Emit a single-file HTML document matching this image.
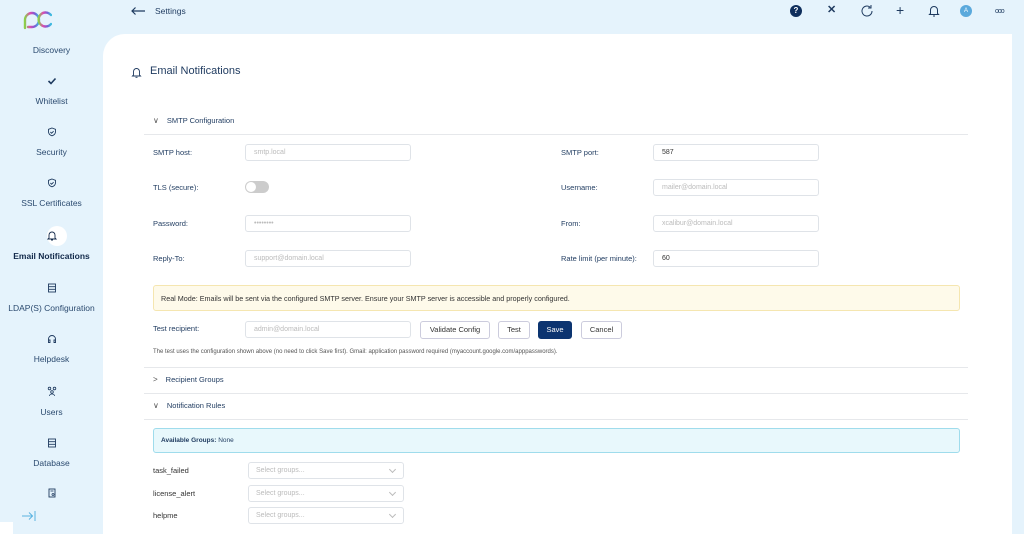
<!DOCTYPE html>
<html><head><meta charset="utf-8"><style>
*{box-sizing:border-box;margin:0;padding:0}
body{width:1024px;height:534px;overflow:hidden;background:#e5f3fc;font-family:"Liberation Sans",sans-serif;position:relative;color:#1e3a5f}
.a{position:absolute}
.nav{position:absolute;left:0;width:103px;text-align:center;font-size:8.5px;color:#2b4a6f}
.nav svg{display:block;margin:0 auto 10px}
.card{left:103px;top:34px;width:909px;height:500px;background:#fff;border-top-left-radius:22px}
.lbl{font-size:7.5px;color:#1e3a5f}
.in{height:17px;border:1px solid #dfe3e8;border-radius:3px;font-size:7px;color:#bbb;padding:4px 8px;background:#fff}
.in.v{color:#333}
.hr{height:1px;background:#e6e8eb}
.btn{height:18px;border:1px solid #ccd;border-radius:3px;font-size:7.5px;color:#333;text-align:center;line-height:16px;background:#fff}
.sec{font-size:7.5px;color:#1e3a5f}
.chev{font-size:8px;color:#555;margin-right:8px}
.sel{width:156px;height:17px;border:1px solid #dfe3e8;border-radius:3px;font-size:7px;color:#bbb;padding:4px 7px}
.sel:after{content:"";position:absolute;right:8px;top:4px;width:4px;height:4px;border-right:1px solid #bbb;border-bottom:1px solid #bbb;transform:rotate(45deg)}
</style></head><body>
<svg class="a" style="left:22px;top:8px" width="30" height="22" viewBox="0 0 30 22">
<defs><linearGradient id="g" x1="0" x2="1"><stop offset="0" stop-color="#8ad14a"/><stop offset=".35" stop-color="#e04bb0"/><stop offset=".7" stop-color="#7a5bd6"/><stop offset="1" stop-color="#3cc0e0"/></linearGradient></defs>
<path d="M3 20V12a7 7 0 1 1 7 7H6" fill="none" stroke="url(#g)" stroke-width="2.4" stroke-linecap="round"/>
<path d="M29 7a7 7 0 1 0 0 9" fill="none" stroke="url(#g)" stroke-width="2.4" stroke-linecap="round"/>
</svg>
<div class="nav" style="top:45px">Discovery</div>
<div class="nav" style="top:76px"><svg width="10" height="10" viewBox="0 0 10 10"><path d="M1.5 5l2.5 2.5 4.5-5" fill="none" stroke="#1e3a5f" stroke-width="1.6"/></svg>Whitelist</div>
<div class="nav" style="top:127px"><svg width="10" height="10" viewBox="0 0 10 10"><path d="M5 1l3.5 1.3v2.5c0 2-1.6 3.4-3.5 4-1.9-.6-3.5-2-3.5-4V2.3z" fill="none" stroke="#1e3a5f" stroke-width=".9"/><path d="M3.4 5l1.2 1.2 2-2" fill="none" stroke="#1e3a5f" stroke-width=".9"/></svg>Security</div>
<div class="nav" style="top:178px"><svg width="10" height="10" viewBox="0 0 10 10"><path d="M5 1l3.5 1.3v2.5c0 2-1.6 3.4-3.5 4-1.9-.6-3.5-2-3.5-4V2.3z" fill="none" stroke="#1e3a5f" stroke-width=".9"/><path d="M3.4 5l1.2 1.2 2-2" fill="none" stroke="#1e3a5f" stroke-width=".9"/></svg>SSL Certificates</div>
<div class="a" style="left:47px;top:226px;width:20px;height:20px;border-radius:50%;background:#fff"></div>
<div class="nav" style="top:230px;font-weight:bold;color:#12294a"><svg width="10" height="11" viewBox="0 0 10 11"><path d="M2 8V5a3 3 0 0 1 6 0v3l1 1H1z M4 10h2" fill="none" stroke="#12294a" stroke-width=".9"/></svg>Email Notifications</div>
<div class="nav" style="top:283px"><svg width="10" height="10" viewBox="0 0 10 10"><rect x="1.5" y="1" width="7" height="8" fill="none" stroke="#1e3a5f" stroke-width=".9"/><path d="M1.5 3.7h7M1.5 6.3h7" stroke="#1e3a5f" stroke-width=".9"/></svg>LDAP(S) Configuration</div>
<div class="nav" style="top:334px"><svg width="10" height="10" viewBox="0 0 10 10"><path d="M1.5 8V5a3.5 3.5 0 0 1 7 0v3M1.5 6h1.5v2.5H1.5zM7 6h1.5v2.5H7z" fill="none" stroke="#1e3a5f" stroke-width=".9"/></svg>Helpdesk</div>
<div class="nav" style="top:386px"><svg width="12" height="11" viewBox="0 0 12 11"><circle cx="3.5" cy="2.5" r="1.3" fill="none" stroke="#1e3a5f" stroke-width=".8"/><circle cx="8.5" cy="2.5" r="1.3" fill="none" stroke="#1e3a5f" stroke-width=".8"/><circle cx="6" cy="6" r="1.3" fill="none" stroke="#1e3a5f" stroke-width=".8"/><path d="M3.5 10a2.5 2 0 0 1 5 0" fill="none" stroke="#1e3a5f" stroke-width=".8"/></svg>Users</div>
<div class="nav" style="top:438px"><svg width="10" height="10" viewBox="0 0 10 10"><rect x="1.5" y="1" width="7" height="8" fill="none" stroke="#1e3a5f" stroke-width=".9"/><path d="M1.5 3.7h7M1.5 6.3h7" stroke="#1e3a5f" stroke-width=".9"/></svg>Database</div>
<div class="nav" style="top:488px"><svg width="10" height="10" viewBox="0 0 10 10"><rect x="2" y="1" width="6" height="8" fill="none" stroke="#1e3a5f" stroke-width=".9"/><path d="M3.5 3h3" stroke="#1e3a5f" stroke-width=".8"/><circle cx="6" cy="6.5" r="1" fill="none" stroke="#1e3a5f" stroke-width=".8"/></svg></div>
<svg class="a" style="left:21px;top:510px" width="16" height="12" viewBox="0 0 16 12"><path d="M1 6h11M8 2.5l3.5 3.5L8 9.5M14 1v10" fill="none" stroke="#5ab3e0" stroke-width="1"/></svg>
<div class="a" style="left:0;top:522px;width:13px;height:12px;background:#fff"></div>
<svg class="a" style="left:130px;top:6px" width="16" height="10" viewBox="0 0 16 10"><path d="M15 5H2M5.5 1.5L2 5l3.5 3.5" fill="none" stroke="#1e3a5f" stroke-width="1.2"/></svg>
<div class="a" style="left:155px;top:6px;font-size:8.5px;color:#1e3a5f">Settings</div>
<div class="a" style="left:790px;top:5px;width:12px;height:12px;border-radius:50%;background:#0e2e5c;color:#fff;font-size:8px;font-weight:bold;text-align:center;line-height:12px">?</div>
<div class="a" style="left:827px;top:3px;font-size:11px;font-weight:bold;color:#1e3a5f">✕</div>
<svg class="a" style="left:860px;top:4px" width="14" height="14" viewBox="0 0 14 14"><path d="M12 7a5 5 0 1 1-1.8-3.8M11 1v3H8" fill="none" stroke="#1e3a5f" stroke-width="1"/></svg>
<div class="a" style="left:896px;top:2px;font-size:14px;color:#1e3a5f">+</div>
<svg class="a" style="left:928px;top:4px" width="12" height="13" viewBox="0 0 12 13"><path d="M2.5 9.5V6a3.5 3.5 0 0 1 7 0v3.5l1 1h-9z M5 12h2" fill="none" stroke="#1e3a5f" stroke-width="1"/></svg>
<div class="a" style="left:960px;top:5px;width:12px;height:12px;border-radius:50%;background:#5aa9dc;color:#fff;font-size:6px;text-align:center;line-height:12px">A</div>
<div class="a" style="left:995px;top:8px;font-size:7px;color:#1e3a5f;letter-spacing:-1px">ooo</div>
<div class="a card"></div>
<svg class="a" style="left:131px;top:66px" width="11" height="12" viewBox="0 0 11 12"><path d="M2.5 9V5.5a3 3 0 0 1 6 0V9l1 1h-8z M4.5 11.3h2" fill="none" stroke="#1e3a5f" stroke-width=".9"/></svg>
<div class="a" style="left:150px;top:65px;font-size:11px;color:#1e3a5f">Email Notifications</div>
<div class="a sec" style="left:153px;top:116px"><span class="chev">∨</span>SMTP Configuration</div>
<div class="a hr" style="left:144px;top:134px;width:824px"></div>
<div class="a lbl" style="left:153px;top:148px">SMTP host:</div>
<div class="a in" style="left:245px;top:144px;width:166px">smtp.local</div>
<div class="a lbl" style="left:561px;top:148px">SMTP port:</div>
<div class="a in v" style="left:653px;top:144px;width:166px">587</div>
<div class="a lbl" style="left:153px;top:183px">TLS (secure):</div>
<div class="a" style="left:245px;top:181px;width:24px;height:12px;border-radius:6px;background:#ccc"><div class="a" style="left:1px;top:1px;width:10px;height:10px;border-radius:50%;background:#fff"></div></div>
<div class="a lbl" style="left:561px;top:183px">Username:</div>
<div class="a in" style="left:653px;top:179px;width:166px">mailer@domain.local</div>
<div class="a lbl" style="left:153px;top:219px">Password:</div>
<div class="a in" style="left:245px;top:215px;width:166px">••••••••</div>
<div class="a lbl" style="left:561px;top:219px">From:</div>
<div class="a in" style="left:653px;top:215px;width:166px">xcalibur@domain.local</div>
<div class="a lbl" style="left:153px;top:254px">Reply-To:</div>
<div class="a in" style="left:245px;top:250px;width:166px">support@domain.local</div>
<div class="a lbl" style="left:561px;top:254px">Rate limit (per minute):</div>
<div class="a in v" style="left:653px;top:250px;width:166px">60</div>
<div class="a" style="left:153px;top:285px;width:807px;height:26px;background:#fefaea;border:1px solid #f5e6b0;border-radius:3px;font-size:7.2px;color:#333;padding:8px 7px">Real Mode: Emails will be sent via the configured SMTP server. Ensure your SMTP server is accessible and properly configured.</div>
<div class="a lbl" style="left:153px;top:324px">Test recipient:</div>
<div class="a in" style="left:245px;top:321px;width:166px">admin@domain.local</div>
<div class="a btn" style="left:420px;top:321px;width:70px">Validate Config</div>
<div class="a btn" style="left:498px;top:321px;width:32px">Test</div>
<div class="a btn" style="left:538px;top:321px;width:34px;background:#0c3470;border-color:#0c3470;color:#fff">Save</div>
<div class="a btn" style="left:581px;top:321px;width:41px">Cancel</div>
<div class="a" style="left:153px;top:349px;font-size:6px;color:#555">The test uses the configuration shown above (no need to click Save first). Gmail: application password required (myaccount.google.com/apppasswords).</div>
<div class="a hr" style="left:144px;top:367px;width:824px"></div>
<div class="a sec" style="left:153px;top:375px"><span class="chev">&gt;</span>Recipient Groups</div>
<div class="a hr" style="left:144px;top:393px;width:824px"></div>
<div class="a sec" style="left:153px;top:401px"><span class="chev">∨</span>Notification Rules</div>
<div class="a hr" style="left:144px;top:419px;width:824px"></div>
<div class="a" style="left:153px;top:428px;width:807px;height:25px;background:#e8f8fc;border:1px solid #9fdcec;border-radius:3px;font-size:6.5px;color:#1e3a5f;padding:8px 7px"><b>Available Groups:</b> None</div>
<div class="a lbl" style="left:153px;top:466px;color:#333">task_failed</div>
<div class="a sel" style="left:248px;top:462px">Select groups...</div>
<div class="a lbl" style="left:153px;top:489px;color:#333">license_alert</div>
<div class="a sel" style="left:248px;top:485px">Select groups...</div>
<div class="a lbl" style="left:153px;top:511px;color:#333">helpme</div>
<div class="a sel" style="left:248px;top:507px">Select groups...</div>
</body></html>
